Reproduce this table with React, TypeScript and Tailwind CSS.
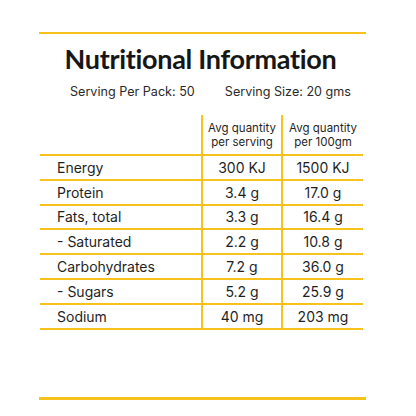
const rows: [string, string, string][] = [
  ["Energy", "300 KJ", "1500 KJ"],
  ["Protein", "3.4 g", "17.0 g"],
  ["Fats, total", "3.3 g", "16.4 g"],
  ["- Saturated", "2.2 g", "10.8 g"],
  ["Carbohydrates", "7.2 g", "36.0 g"],
  ["- Sugars", "5.2 g", "25.9 g"],
  ["Sodium", "40 mg", "203 mg"],
];

export default function App() {
  return (
    <div className="w-[416px] h-[416px] bg-white pt-[32px] font-['Inter',sans-serif] text-[#1f1f1f]">
      <div className="ml-[39px] w-[327px] flex flex-col">
        <div className="h-[2px] bg-[#f8c21c]" />
        <h1 className="text-center font-bold text-[27px] leading-[32px] mt-[9px] pr-[4px] tracking-[-0.3px] font-['Lato',sans-serif] text-[#161616]">
          Nutritional Information
        </h1>
        <div className="flex justify-center gap-[30px] pl-[16px] text-[12.6px] leading-[18px] mt-[8px] text-[#2a2a2a]">
          <span>Serving Per Pack: 50</span>
          <span>Serving Size: 20 gms</span>
        </div>
        <table className="ml-[1px] mt-[14px] w-[323px] border-collapse text-[14px]">
          <thead>
            <tr className="h-[40px] border-b-2 border-[#f8c21c]">
              <th className="w-[162px]" />
              <th className="w-[80px] border-x-2 border-[#f8c21c] font-normal text-[11.5px] leading-[14px] pt-[1px]">
                Avg quantity
                <br />
                per serving
              </th>
              <th className="font-normal text-[11.5px] leading-[14px] pt-[1px]">
                Avg quantity
                <br />
                per 100gm
              </th>
            </tr>
          </thead>
          <tbody>
            {rows.map(([name, a, b]) => (
              <tr key={name} className="h-[24.8px] border-b-2 border-[#f8c21c]">
                <td className="pl-[17px]">{name}</td>
                <td className="text-center border-x-2 border-[#f8c21c]">{a}</td>
                <td className="text-center">{b}</td>
              </tr>
            ))}
          </tbody>
        </table>
        <div className="h-[3px] bg-[#f8c21c] mt-[67px]" />
      </div>
    </div>
  );
}
